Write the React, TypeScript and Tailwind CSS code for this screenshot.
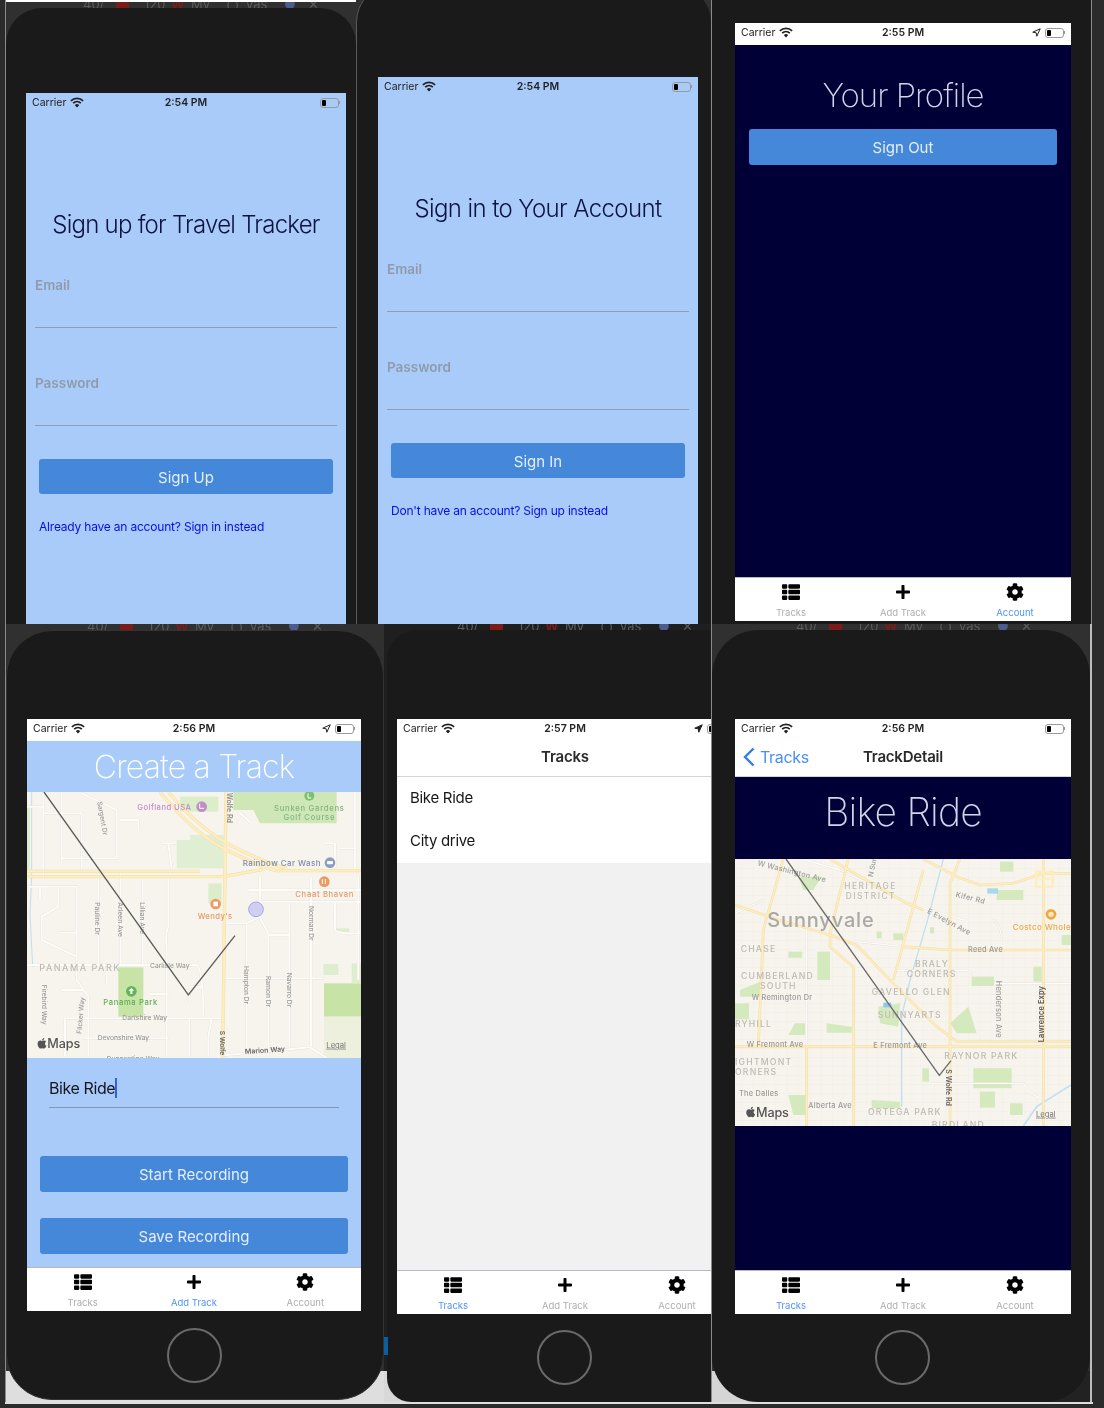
import type { ReactNode } from "react"
import { FaApple, FaCog, FaPlus, FaThList } from "react-icons/fa"

type Tab = "Tracks" | "Add Track" | "Account"

const TABS: { name: Tab; icon: ReactNode }[] = [
  { name: "Tracks", icon: <FaThList size={18} /> },
  { name: "Add Track", icon: <FaPlus size={16} /> },
  { name: "Account", icon: <FaCog size={18} /> },
]

function Wifi() {
  return (
    <svg width="14" height="11" viewBox="0 0 16 12" className="text-[#222]" aria-hidden>
      <path d="M1 4.2a10 10 0 0 1 14 0" fill="none" stroke="currentColor" strokeWidth="2" />
      <path d="M3.6 6.8a6.4 6.4 0 0 1 8.8 0" fill="none" stroke="currentColor" strokeWidth="2" />
      <path d="M8 11.8 5.5 9.2a3.4 3.4 0 0 1 5 0z" fill="currentColor" />
    </svg>
  )
}

function Battery() {
  return (
    <span className="flex items-center">
      <span className="flex h-[10px] w-[19px] items-center rounded-[3px] border border-[#9a9a9a] p-[1px]">
        <span className="h-full w-[4px] rounded-[1px] bg-black" />
      </span>
      <span className="h-[3px] w-[1px] bg-[#999]" />
    </span>
  )
}

function LocationArrow({ filled }: { filled?: boolean }) {
  return (
    <svg width="9" height="9" viewBox="0 0 12 12" aria-hidden>
      <path
        d="M11 1 1 5.6l4.6.8.8 4.6z"
        fill={filled ? "#222" : "none"}
        stroke="#222"
        strokeWidth="1.3"
        strokeLinejoin="round"
      />
    </svg>
  )
}

function StatusBar({ time, location, filled }: { time: string; location?: boolean; filled?: boolean }) {
  return (
    <div className="grid h-[19px] shrink-0 grid-cols-[1fr_auto_1fr] items-center px-[6px] text-[10.5px] text-[#222]">
      <span className="flex items-center gap-[4px]">
        Carrier <Wifi />
      </span>
      <span className="font-semibold">{time}</span>
      <span className="flex items-center justify-end gap-[4px]">
        {location && <LocationArrow filled={filled} />}
        <Battery />
      </span>
    </div>
  )
}

function TabBar({ active }: { active: Tab }) {
  return (
    <div className="grid h-[44px] shrink-0 grid-cols-3 border-t border-[#b9b9c4] bg-white">
      {TABS.map((t) => (
        <div key={t.name} className="flex flex-col items-center">
          <span className="flex h-[27px] items-center text-black">{t.icon}</span>
          <span className={`text-[9.5px] leading-[16px] ${t.name === active ? "text-[#4f94f7]" : "text-[#aeaeae]"}`}>
            {t.name}
          </span>
        </div>
      ))}
    </div>
  )
}

function PrimaryButton({ children, className }: { children: ReactNode; className: string }) {
  return (
    <div className={`flex items-center justify-center rounded-[3px] bg-[#4588da] pt-[3px] text-[15px] text-[#e4eefb] ${className}`}>
      {children}
    </div>
  )
}

function Field({ label }: { label: string }) {
  return (
    <div className="h-[56px] border-b border-[#8c9fb9]">
      <span className="text-[13.5px] leading-[20px] font-semibold text-[#8f9bab]">{label}</span>
    </div>
  )
}

function AuthScreen(props: { time: string; title: string; action: string; link: string; titleClass: string }) {
  return (
    <div className="h-[600px] w-[320px] bg-[#a9cbfa]">
      <StatusBar time={props.time} />
      <h1 className={`mt-[98px] text-center text-[24px] leading-[30px] font-light text-[#0d1240] ${props.titleClass}`}>
        {props.title}
      </h1>
      <div className="mx-[9px] mt-[32px] flex flex-col gap-[42px]">
        <Field label="Email" />
        <Field label="Password" />
      </div>
      <PrimaryButton className="mx-[13px] mt-[33px] h-[35px]">{props.action}</PrimaryButton>
      <p className="mt-[23px] ml-[13px] text-[12px] leading-[20px] tracking-[-0.2px] text-[#0a0af0]">{props.link}</p>
    </div>
  )
}

function NavBar({ title, left }: { title: string; left?: ReactNode }) {
  return (
    <div className="grid h-[39px] shrink-0 grid-cols-[1fr_auto_1fr] items-center border-b border-[#d5d5d8] px-[8px]">
      <span className="flex items-center">{left}</span>
      <span className="text-[15px] font-semibold tracking-[-0.2px] text-[#2a2a2a]">{title}</span>
      <span />
    </div>
  )
}

function HomeButton({ className }: { className: string }) {
  return <div className={`size-[55px] rounded-full border-2 border-[#6a6a6a] ${className}`} />
}

function ChromeTabs({ className }: { className: string }) {
  return (
    <div className={`flex h-[6px] shrink-0 items-center overflow-hidden text-[13px] whitespace-nowrap text-[#5c5c5c] ${className}`}>
      <span className="w-[33px]">40/</span>
      <span className="h-[12px] w-[13px] bg-[#7a1d18]" />
      <span className="ml-[15px] w-[27px]">120</span>
      <span className="w-[20px] font-bold text-[#7a1d18]">W</span>
      <span className="w-[35px]">My</span>
      <span className="w-[20px]">( )</span>
      <span className="w-[38px]">vas</span>
      <span className="w-[24px] text-[#4b5d8c]">●</span>
      <span>✕</span>
    </div>
  )
}

const CASE = "#e3dfd7"
const ROAD = "#fdfcf9"

function Roads({ d, width = 6 }: { d: string[]; width?: number }) {
  return (
    <g fill="none" strokeLinejoin="round">
      <path d={d.join(" ")} stroke={CASE} strokeWidth={width + 2} />
      <path d={d.join(" ")} stroke={ROAD} strokeWidth={width} />
    </g>
  )
}

function Highways({ d, width = 7 }: { d: string[]; width?: number }) {
  return (
    <g fill="none" strokeLinejoin="round">
      <path d={d.join(" ")} stroke="#f3dcae" strokeWidth={width + 3} />
      <path d={d.join(" ")} stroke="#fdeebb" strokeWidth={width} />
    </g>
  )
}

function MapLabel(props: {
  x: number
  y: number
  size?: number
  fill?: string
  spacing?: number
  rotate?: number
  anchor?: "start" | "middle"
  weight?: number
  children: string
}) {
  const { x, y, size = 20, fill = "#9a9a98", spacing = 0, rotate, anchor = "start", weight = 500 } = props
  return (
    <text
      x={x}
      y={y}
      fontSize={size}
      fill={fill}
      letterSpacing={spacing}
      fontWeight={weight}
      textAnchor={anchor}
      transform={rotate ? `rotate(${rotate} ${x} ${y})` : undefined}
    >
      {props.children}
    </text>
  )
}

function MapsMark({ x, y }: { x: number; y: number }) {
  return (
    <g>
      <FaApple x={x} y={y - 32} size={36} fill="#555" />
      <text x={x + 34} y={y} fontSize={38} fill="#555" fontWeight={500} letterSpacing={-0.5}>
        Maps
      </text>
    </g>
  )
}

// coordinates below are in 3x crop space, that's why the viewBox is so large
function PanamaMap() {
  return (
    <svg viewBox="21 36 1002 798" className="block h-[266px] w-full" preserveAspectRatio="none">
      <rect x="21" y="36" width="1002" height="798" fill="#f7f4ee" />
      <g>
        <path d="M640 36H950V130H720L700 90H640Z" fill="#cfe6b6" />
        <rect x="480" y="50" width="115" height="45" fill="#dcedca" />
        <path d="M470 180H510V165H610V265H470Z" fill="#e0eed3" />
        <rect x="565" y="310" width="40" height="60" fill="#dcedca" />
        <rect x="295" y="562" width="75" height="148" fill="#c7e3a6" />
        <rect x="912" y="610" width="111" height="100" fill="#c7e3a6" />
        <rect x="912" y="710" width="111" height="124" fill="#ecf0dc" />
        <rect x="910" y="552" width="45" height="33" fill="#dfedcf" />
        <rect x="995" y="550" width="28" height="60" fill="#dfedcf" />
        <path d="M948 445h40v12h-40z" fill="#dfedcf" />
        <path d="M21 80h8v190h-8z" fill="#dcedca" />
      </g>
      <path d="M35 36V290L30 400 38 560" fill="none" stroke="#bcdff2" strokeWidth="3" />
      <Roads
        d={[
          "M70 36V300", "M125 36V245", "M21 80H70", "M70 100H185V265", "M185 40 290 90V235H125",
          "M300 120H355V150", "M235 290V560", "M302 270V560", "M368 290V560", "M425 190H470", "M445 190 455 265",
          "M445 290V440Q435 460 440 500V830", "M21 320H170V600L205 650V830", "M60 320V355",
          "M115 325V380L65 410V480L170 530", "M115 458H170", "M21 555H530Q550 570 550 710", "M610 595H910",
          "M130 715H610", "M135 715V830", "M190 775H445", "M508 715V830", "M575 715 565 770V830", "M510 620H550",
          "M505 640 510 665", "M390 642H445", "M260 560V615", "M125 630H190", "M680 430V830", "M745 470V830",
          "M808 370V800", "M873 290V810", "M720 290V410L680 430H610", "M720 415 745 460V470", "M745 465H808",
          "M685 330H1023", "M720 365H1023", "M945 365V450Q950 462 1023 460", "M915 190H945V262", "M960 205H1005V280",
          "M1005 36V280", "M1015 290V600", "M660 100 695 130",
        ]}
      />
      <Roads d={["M612 826 870 802 920 834"]} width={6} />
      <Highways
        d={[
          "M618 36 615 282 608 834",
          "M420 36Q520 160 620 210T770 272H1023",
          "M445 36Q540 150 640 200T800 265",
          "M21 274H540",
          "M21 290H610L730 268",
        ]}
      />
      <MapLabel x={352} y={90} size={23} fill="#c08ccb" spacing={1.3}>Golfland USA</MapLabel>
      <circle cx="545" cy="80" r="16" fill="#c08ccb" />
      <path d="M539 71v14h13" fill="none" stroke="#fff" strokeWidth="3" />
      <circle cx="868" cy="47" r="15" fill="#7cc070" />
      <path d="M864 40v14h10" fill="none" stroke="#fff" strokeWidth="3" />
      <MapLabel x={868} y={93} size={23} fill="#7fb77e" spacing={2.2} anchor="middle">Sunken Gardens</MapLabel>
      <MapLabel x={868} y={119} size={23} fill="#7fb77e" spacing={2.2} anchor="middle">Golf Course</MapLabel>
      <MapLabel x={620} y={38} rotate={90} fill="#8d8d8d" size={21} weight={600}>Wolfe Rd</MapLabel>
      <MapLabel x={232} y={66} rotate={80} size={20}>Sargent Dr</MapLabel>
      <MapLabel x={668} y={257} size={24} fill="#7c8bab" spacing={1.2}>Rainbow Car Wash</MapLabel>
      <circle cx="930" cy="248" r="16" fill="#8b9cc1" />
      <rect x="921" y="243" width="18" height="10" rx="3" fill="#fff" />
      <circle cx="913" cy="305" r="16" fill="#ec9a62" />
      <path d="M907 297v15M916 297v15" stroke="#fff" strokeWidth="3" />
      <MapLabel x={826} y={351} size={23} fill="#e69a66" spacing={2}>Chaat Bhavan</MapLabel>
      <circle cx="587" cy="372" r="16" fill="#ec9a62" />
      <path d="M580 365h14v14h-14z" fill="#fff" />
      <MapLabel x={533} y={417} size={23} fill="#e69a66" spacing={1.2}>Wendy's</MapLabel>
      <MapLabel x={226} y={367} rotate={90} size={20}>Pauline Dr</MapLabel>
      <MapLabel x={294} y={367} rotate={90} size={20}>Arleen Ave</MapLabel>
      <MapLabel x={361} y={367} rotate={90} size={20}>Lillian Ave</MapLabel>
      <MapLabel x={867} y={378} rotate={90} size={20}>Norman Dr</MapLabel>
      <MapLabel x={673} y={558} rotate={90} size={20}>Hampton Dr</MapLabel>
      <MapLabel x={738} y={588} rotate={90} size={20}>Ramon Dr</MapLabel>
      <MapLabel x={802} y={578} rotate={90} size={20}>Navarro Dr</MapLabel>
      <MapLabel x={66} y={614} rotate={90} size={20}>Firebird Way</MapLabel>
      <MapLabel x={184} y={762} rotate={-85} size={20}>Flicker Way</MapLabel>
      <MapLabel x={58} y={573} size={27} fill="#bdbab3" spacing={4.5}>PANAMA PARK</MapLabel>
      <MapLabel x={390} y={564} size={20}>Carlisle Way</MapLabel>
      <circle cx="334" cy="634" r="16" fill="#62b35a" />
      <path d="M334 624l9 8h-6v10h-6v-10h-6z" fill="#fff" />
      <MapLabel x={250} y={676} size={23} fill="#5eae58" spacing={1.8}>Panama Park</MapLabel>
      <MapLabel x={307} y={719} size={20}>Dartshire Way</MapLabel>
      <MapLabel x={233} y={781} size={20}>Devonshire Way</MapLabel>
      <MapLabel x={260} y={842} size={20}>Dunnarding Way</MapLabel>
      <MapLabel x={600} y={752} rotate={90} fill="#666" size={20} weight={600}>S Wolfe</MapLabel>
      <MapLabel x={675} y={822} rotate={-4} fill="#666" size={21} weight={600}>Marion Way</MapLabel>
      <circle cx="708" cy="388" r="22" fill="#cfcff2" stroke="#a5a5e8" strokeWidth="3" />
      <path d="M72 36 505 645 645 467" fill="none" stroke="#5c5c5c" strokeWidth="4" />
      <MapsMark x={48} y={804} />
      <text x={919} y={803} fontSize={23} fill="#777" textDecoration="underline">Legal</text>
    </svg>
  )
}

function SunnyvaleMap() {
  return (
    <svg viewBox="15 27 1008 801" className="block h-[267px] w-full" preserveAspectRatio="none">
      <defs>
        <pattern id="blocks" width="34" height="27" patternUnits="userSpaceOnUse">
          <path d="M34 0H0V27" fill="none" stroke="#ede9e2" strokeWidth="2" />
        </pattern>
      </defs>
      <rect x="15" y="27" width="1008" height="801" fill="#f7f4ee" />
      <rect x="15" y="27" width="1008" height="801" fill="url(#blocks)" />
      <g fill="#d5e9bf">
        <path d="M262 305h38v85h-38z" />
        <path d="M205 80h70l-25 40h-30z" />
        <path d="M175 305h42v18h-42z" />
        <path d="M725 380h70v28h-70z" />
        <path d="M30 420 90 395v45H30z" />
        <path d="M15 460h42v48H15z" />
        <path d="M290 520 365 530v18H290z" />
        <path d="M195 520h30v35h-50z" />
        <path d="M445 470 510 460 505 530 450 520z" />
        <path d="M660 520 715 470 740 550H680z" />
        <path d="M730 655h115v60H730z" />
        <path d="M750 725h45v48h-45z" />
        <path d="M577 655h20v40h-20z" />
        <path d="M175 735h55v60h-40z" />
        <path d="M425 750 510 755v20H425z" />
        <path d="M840 760h38v35h-38z" />
        <path d="M810 35h40v30h-40z" />
        <path d="M800 120h80v30h-80z" />
        <path d="M910 350h25v45h-25z" />
        <path d="M995 255h28v30h-28z" />
        <path d="M440 245h15v20h-15z" />
        <path d="M490 250h30v20h-30z" />
        <path d="M600 232h12v18h-12z" />
      </g>
      <path d="M640 27 590 220 540 390 515 500V770" fill="none" stroke="#bfe0f1" strokeWidth="4" />
      <path d="M880 828 920 770 1023 705" fill="none" stroke="#bfe0f1" strokeWidth="5" />
      <path d="M460 458h24v14h-24z" fill="#8dc8ec" />
      <path d="M772 115h32v16h-32z" fill="#a9d8ec" />
      <Roads
        d={[
          "M380 275 520 290", "M15 450H450", "M230 240V590", "M500 362H710L730 372H795V570", "M795 400H1023",
          "M570 170 700 210H790Q810 220 815 265", "M225 30 330 60 560 170", "M600 700H880Q900 740 940 745",
          "M15 190 100 150",
        ]}
        width={4}
      />
      <Highways
        d={[
          "M15 165 130 205 300 255 380 285 470 380 620 530 680 575H1023",
          "M15 590H1023",
          "M160 27 100 240 85 590",
          "M355 27 300 250V290L370 350V828",
          "M230 590V828",
          "M300 27 530 160 580 180",
          "M580 27 680 80 750 105 850 100 940 70H1023",
          "M580 60 490 390",
          "M690 27 660 100V828",
          "M940 27V828",
          "M520 290 660 300H1023",
        ]}
        width={5}
      />
      <path d="M918 65h50v45h-50z" fill="none" stroke="#fdeebb" strokeWidth="7" />
      <path d="M943 65v45M918 87h50" stroke="#fdeebb" strokeWidth="5" />
      <MapLabel x={82} y={46} rotate={14} size={22} spacing={0.8}>W Washington Ave</MapLabel>
      <MapLabel x={428} y={82} rotate={-78} size={21}>N Sunnyvale</MapLabel>
      <MapLabel x={343} y={118} size={25} fill="#bdbab3" spacing={4.5}>HERITAGE</MapLabel>
      <MapLabel x={347} y={147} size={25} fill="#bdbab3" spacing={4.5}>DISTRICT</MapLabel>
      <MapLabel x={112} y={232} size={60} fill="#aaa8a4" spacing={2.5}>Sunnyvale</MapLabel>
      <MapLabel x={676} y={140} rotate={14} size={22} spacing={0.8}>Kifer Rd</MapLabel>
      <MapLabel x={590} y={188} rotate={28} size={22} spacing={0.8}>E Evelyn Ave</MapLabel>
      <MapLabel x={714} y={307} size={22} spacing={0.8}>Reed Ave</MapLabel>
      <circle cx="963" cy="193" r="16" fill="#eda93f" />
      <circle cx="963" cy="193" r="8" fill="#fbe6c2" />
      <MapLabel x={848} y={239} size={24} fill="#e9a948" spacing={1.2}>Costco Wholesale</MapLabel>
      <MapLabel x={32} y={307} size={26} fill="#bdbab3" spacing={3.6}>CHASE</MapLabel>
      <MapLabel x={555} y={350} size={26} fill="#bdbab3" spacing={3.6}>BRALY</MapLabel>
      <MapLabel x={530} y={380} size={26} fill="#bdbab3" spacing={3.6}>CORNERS</MapLabel>
      <MapLabel x={33} y={388} size={26} fill="#bdbab3" spacing={3.6}>CUMBERLAND</MapLabel>
      <MapLabel x={90} y={418} size={26} fill="#bdbab3" spacing={3.6}>SOUTH</MapLabel>
      <MapLabel x={65} y={449} size={22} spacing={0.8}>W Remington Dr</MapLabel>
      <MapLabel x={425} y={434} size={26} fill="#bdbab3" spacing={3.6}>GAVELLO GLEN</MapLabel>
      <MapLabel x={443} y={503} size={26} fill="#bdbab3" spacing={3.6}>SUNNYARTS</MapLabel>
      <MapLabel x={15} y={530} size={26} fill="#bdbab3" spacing={3.6}>RYHILL</MapLabel>
      <MapLabel x={798} y={392} rotate={90} size={22} spacing={0.8}>Henderson Ave</MapLabel>
      <MapLabel x={942} y={577} rotate={-90} size={22} fill="#555" weight={600} spacing={0.6}>Lawrence Expy</MapLabel>
      <MapLabel x={50} y={592} size={22} spacing={0.8}>W Fremont Ave</MapLabel>
      <MapLabel x={430} y={594} size={22} spacing={0.8}>E Fremont Ave</MapLabel>
      <MapLabel x={643} y={626} size={26} fill="#bdbab3" spacing={3.6}>RAYNOR PARK</MapLabel>
      <MapLabel x={15} y={646} size={26} fill="#bdbab3" spacing={3.6}>IGHTMONT</MapLabel>
      <MapLabel x={15} y={676} size={26} fill="#bdbab3" spacing={3.6}>ORNERS</MapLabel>
      <MapLabel x={27} y={737} size={22} spacing={0.8}>The Dalles</MapLabel>
      <MapLabel x={235} y={773} size={22} spacing={0.8}>Alberta Ave</MapLabel>
      <MapLabel x={414} y={795} size={26} fill="#bdbab3" spacing={3.6}>ORTEGA PARK</MapLabel>
      <MapLabel x={605} y={834} size={26} fill="#bdbab3" spacing={3.6}>BIRDLAND</MapLabel>
      <MapLabel x={648} y={658} rotate={90} size={21} fill="#666" weight={600}>S Wolfe Rd</MapLabel>
      <path d="M168 27 628 676 663 632" fill="none" stroke="#6b6b6b" strokeWidth="4" />
      <MapsMark x={44} y={800} />
      <text x={918} y={800} fontSize={23} fill="#777" textDecoration="underline">Legal</text>
    </svg>
  )
}

export default function App() {
  return (
    <div className="flex h-[1408px] w-[1104px] flex-col overflow-hidden bg-[#2b2b2b] pl-[5px] font-['Inter','Noto_Sans',sans-serif] blur-[0.5px]">
      {/* top row */}
      <div className="flex h-[624px] w-[1088px] shrink-0 border-l border-[#8a8a8a]">
        <div className="flex w-[350px] flex-col overflow-hidden border-t-2 border-white bg-[#303030]">
          <ChromeTabs className="pl-[77px]" />
          <div className="h-[700px] rounded-t-[36px] bg-[#1a1a1a] pt-[85px] pl-[20px]">
            <AuthScreen
              time="2:54 PM"
              title="Sign up for Travel Tracker"
              titleClass="tracking-[-0.75px]"
              action="Sign Up"
              link="Already have an account? Sign in instead"
            />
          </div>
        </div>
        <div className="w-[355px] overflow-hidden bg-[#303030]">
          <div className="-mt-[14px] h-[700px] rounded-t-[36px] border-l border-[#5a5a5a] bg-[#1a1a1a] pt-[91px] pl-[21px]">
            <AuthScreen
              time="2:54 PM"
              title="Sign in to Your Account"
              titleClass="tracking-[-0.6px]"
              action="Sign In"
              link="Don't have an account? Sign up instead"
            />
          </div>
        </div>
        <div className="w-[381px] overflow-hidden border-x border-[#8a8a8a] bg-[#1a1a1a] pt-[23px] pl-[23px]">
          <div className="flex h-[598px] w-[336px] flex-col bg-[#000036]">
            <div className="h-[22px] shrink-0 bg-white">
              <StatusBar time="2:55 PM" location />
            </div>
            <h1 className="mt-[28px] text-center text-[33px] leading-[44px] font-extralight tracking-[-1px] text-[#cfd6ea]">Your Profile</h1>
            <PrimaryButton className="mx-[14px] mt-[12px] h-[36px]">Sign Out</PrimaryButton>
            <div className="flex-1" />
            <TabBar active="Account" />
          </div>
        </div>
      </div>

      {/* bottom row */}
      <div className="flex h-[778px] w-[1088px] shrink-0 border-l border-[#8a8a8a]">
        <div className="flex w-[378px] flex-col overflow-hidden bg-[linear-gradient(#303030_96%,#dedede_96%)]">
          <ChromeTabs className="pl-[81px]" />
          <div className="flex h-[770px] flex-col items-center rounded-[46px] border border-[#333] bg-[#1a1a1a] pt-[88px] pr-[2px]">
            <div className="flex h-[592px] w-[334px] flex-col bg-[#a9cbfa]">
              <div className="h-[22px] shrink-0 bg-white">
                <StatusBar time="2:56 PM" location />
              </div>
              <div className="h-[51px] shrink-0 text-center text-[32px] leading-[52px] font-extralight tracking-[-0.8px] text-white">Create a Track</div>
              <PanamaMap />
              <div className="mx-[22px] mt-[20px] flex h-[30px] items-start border-b border-[#8497b3] text-[16px] leading-[20px] tracking-[-0.4px] text-[#15171c]">
                Bike Ride
                <span className="h-[20px] w-[1.5px] bg-[#3a5fd8]" />
              </div>
              <PrimaryButton className="mx-[13px] mt-[48px] h-[36px]">Start Recording</PrimaryButton>
              <PrimaryButton className="mx-[13px] mt-[26px] h-[36px]">Save Recording</PrimaryButton>
              <div className="flex-1" />
              <TabBar active="Add Track" />
            </div>
            <HomeButton className="mt-[17px]" />
          </div>
        </div>
        <div className="relative flex w-[327px] flex-col overflow-hidden bg-[linear-gradient(#1f1f1f_96%,#d8d8d8_96%)] pl-[3px]">
          <span className="absolute top-[713px] left-0 h-[18px] w-[4px] bg-[#0a5fa0]" />
          <ChromeTabs className="pl-[70px]" />
          <div className="flex h-[772px] w-[380px] flex-col rounded-bl-[24px] rounded-tl-[30px] bg-[#1a1a1a] pt-[89px] pl-[10px]">
            <div className="flex h-[595px] w-[336px] flex-col bg-[#f1f1f1]">
              <div className="shrink-0 bg-white">
                <StatusBar time="2:57 PM" location filled />
                <NavBar title="Tracks" />
              </div>
              <div className="flex flex-col bg-white pt-[1px] text-[15px] tracking-[-0.3px] text-[#17171a]">
                <div className="flex h-[41px] items-center px-[13px]">Bike Ride</div>
                <div className="flex h-[44px] items-center px-[13px]">City drive</div>
              </div>
              <div className="flex-1" />
              <TabBar active="Tracks" />
            </div>
            <HomeButton className="mt-[16px] ml-[140px]" />
          </div>
        </div>
        <div className="flex w-[381px] flex-col overflow-hidden border-r-2 border-l border-r-[#bdbdbd] border-l-[#8a8a8a] bg-[linear-gradient(#303030_96%,transparent_96%),linear-gradient(90deg,#d5d5d5_60px,#222222_60px)]">
          <ChromeTabs className="pl-[84px]" />
          <div className="flex h-[772px] flex-col rounded-[46px] bg-[#1a1a1a] pt-[89px] pl-[23px]">
            <div className="flex h-[595px] w-[336px] flex-col bg-[#000036]">
              <div className="shrink-0 bg-white">
                <StatusBar time="2:56 PM" />
                <NavBar
                  title="TrackDetail"
                  left={
                    <span className="flex items-center gap-[5px] text-[16px] tracking-[-0.3px] text-[#4a90f0]">
                      <svg width="12" height="20" viewBox="0 0 12 20" aria-hidden>
                        <path d="M10.5 1.5 2 10l8.5 8.5" fill="none" stroke="#2f7df0" strokeWidth="2.4" />
                      </svg>
                      Tracks
                    </span>
                  }
                />
              </div>
              <div className="h-[82px] shrink-0 text-center text-[39px] leading-[70px] font-extralight tracking-[-0.8px] text-[#cfd6ea]">Bike Ride</div>
              <SunnyvaleMap />
              <div className="flex-1" />
              <TabBar active="Tracks" />
            </div>
            <HomeButton className="mt-[16px] ml-[140px]" />
          </div>
        </div>
      </div>
      <div className="h-[2px] w-[1088px] shrink-0 bg-[#dedede]" />
    </div>
  )
}
